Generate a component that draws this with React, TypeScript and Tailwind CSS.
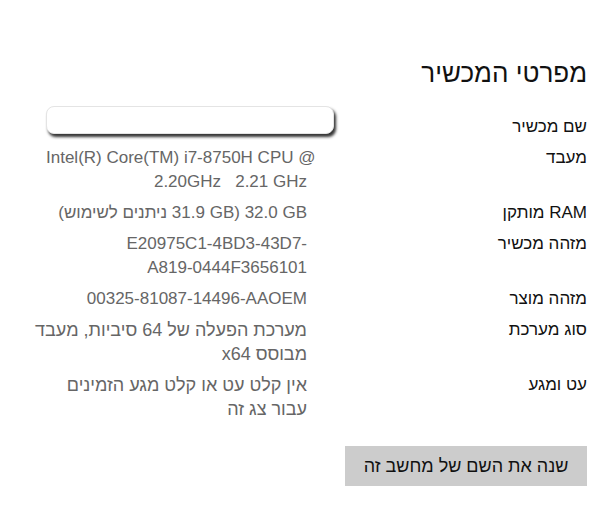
import React from "react";

const font = { fontFamily: '"Liberation Sans", Arial, sans-serif' };

function Row({ label, children }: { label: string; children: React.ReactNode }) {
  return (
    <div className="flex">
      <div className="w-[253px] shrink-0 text-[17px] leading-[24px] text-[#111111]">{label}</div>
      <div className="w-[288px] pr-[27px] text-[17px] leading-[24px] text-[#666666] whitespace-nowrap">{children}</div>
    </div>
  );
}

export default function App() {
  return (
    <div dir="rtl" className="w-[606px] h-[529px] bg-white pr-[19px] pt-[57px]" style={font}>
      <h1 className="text-[26px] leading-[32px] font-normal text-[#111111]">מפרטי המכשיר</h1>
      <div className="mt-[17px] flex flex-col gap-[7px]">
        <div className="flex items-end h-[33px]">
          <div className="w-[253px] shrink-0 text-[17px] leading-[24px] text-[#111111]">שם מכשיר</div>
          <div className="w-[288px] h-[28px] self-start rounded-[8px] bg-white border border-[#e4e4e4] shadow-[2px_3px_3px_rgba(0,0,0,0.8)]" />
        </div>
        <Row label="מעבד">
          <div dir="ltr" className="text-right">Intel(R) Core(TM) i7-8750H CPU @</div>
          <div dir="ltr" className="text-right whitespace-pre">2.20GHz   2.21 GHz</div>
        </Row>
        <Row label="RAM מותקן">
          <bdi>32.0 GB</bdi> (<bdi>31.9 GB</bdi> ניתנים לשימוש)
        </Row>
        <Row label="מזהה מכשיר">
          <div dir="ltr" className="text-right">E20975C1-4BD3-43D7-</div>
          <div dir="ltr" className="text-right">A819-0444F3656101</div>
        </Row>
        <Row label="מזהה מוצר">
          <div dir="ltr" className="text-right">00325-81087-14496-AAOEM</div>
        </Row>
        <Row label="סוג מערכת">
          <div className="text-[18px]">מערכת הפעלה של 64 סיביות, מעבד</div>
          <div className="text-[18px]">מבוסס x64</div>
        </Row>
        <Row label="עט ומגע">
          <div className="text-[18px]">אין קלט עט או קלט מגע הזמינים</div>
          <div className="text-[18px]">עבור צג זה</div>
        </Row>
      </div>
      <button className="mt-[25px] w-[242px] h-[40px] bg-[#cccccc] text-[18px] text-[#111111]" style={font}>
        שנה את השם של מחשב זה
      </button>
    </div>
  );
}
